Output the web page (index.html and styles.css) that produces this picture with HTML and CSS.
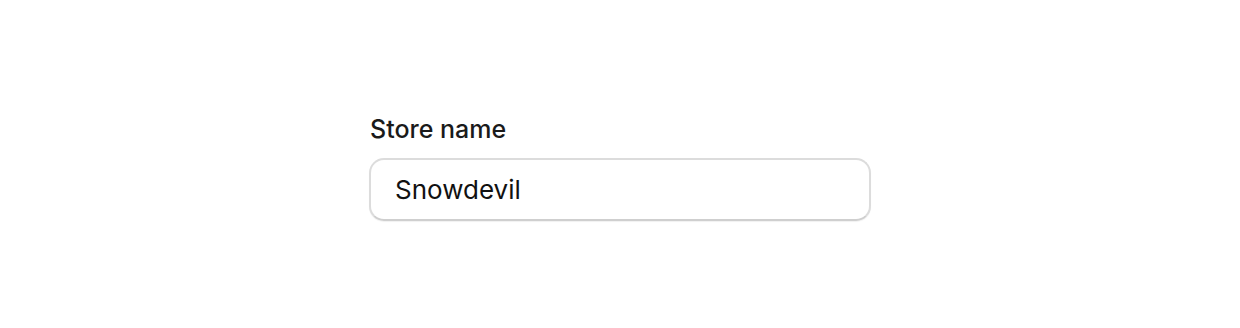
FILE: index.html
```html
<!DOCTYPE html>
<html lang="en">
  <head>
    <meta charset="utf-8">
    <title>Store name</title>
    <link rel="stylesheet" href="styles.css">
  </head>
  <body>
    <div id="wrap">
      <form action="#" class="field">
        <label for="storeName" class="label">Store name</label>
        <input type="text" id="storeName" class="ipt" value="Snowdevil">
      </form>
    </div>
  </body>
</html>
```

FILE: styles.css
```css
* {
  margin:0;
  padding:0;
  box-sizing:border-box;
  font-family:Inter,"Noto Sans",sans-serif;
}
html, body {height:100%;background:#fff;}
body {color:#111;}
#wrap {display:flex;justify-content:center;align-items:center;height:100%;padding-top:5px;}
.field {display:flex;flex-direction:column;width:502px;}
.label {font-size:25px;font-weight:500;line-height:32px;color:#1a1a1a;padding-left:1px;margin-bottom:13px;}
.ipt {
  width:100%;
  height:63px;
  padding:0 24px;
  border:2px solid #dcdcdc;
  border-bottom-color:#cfcfcf;
  border-radius:15px;
  font-size:26px;
  color:#111;
  background:#fff;
  outline:none;
  box-shadow:0 1px 1px rgba(0,0,0,0.06);
}
```
